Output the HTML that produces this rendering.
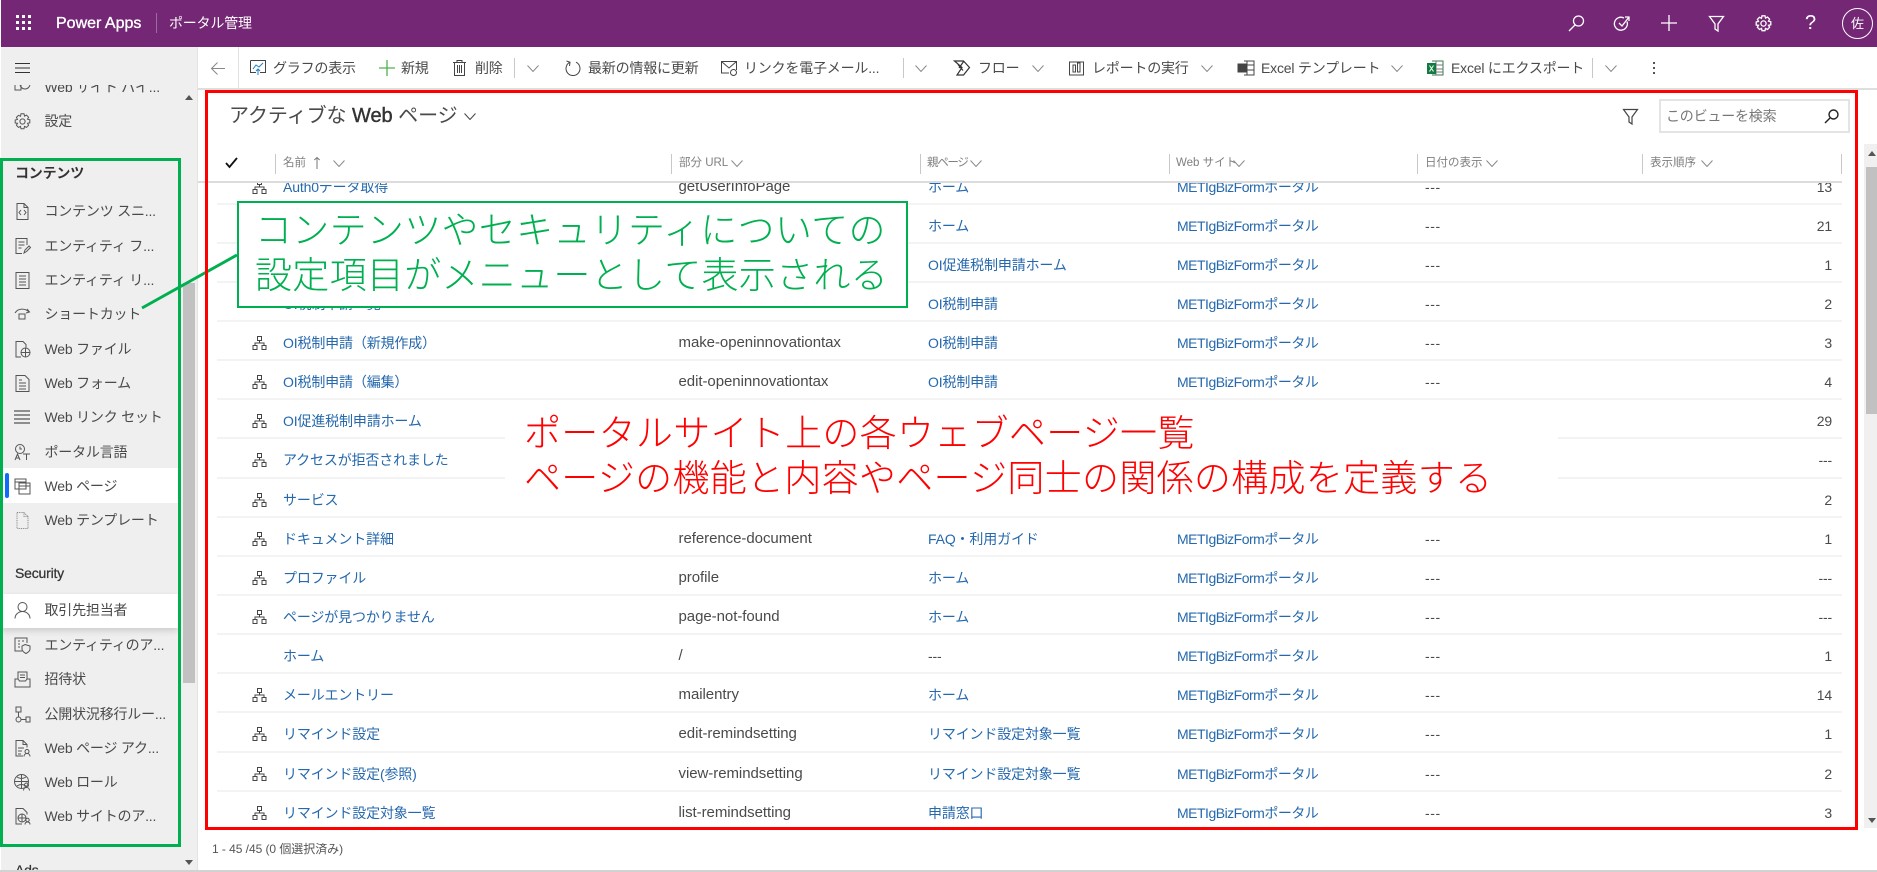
<!DOCTYPE html>
<html lang="ja"><head><meta charset="utf-8"><title>ポータル管理</title>
<style>
*{box-sizing:border-box}
html,body{margin:0;padding:0;width:1877px;height:872px;overflow:hidden;background:#fff;font-family:"Liberation Sans","Noto Sans CJK JP",sans-serif;color:#333}
.a{position:absolute;white-space:nowrap}
.t{position:absolute;white-space:nowrap;font-size:14px;line-height:20px;color:#4a4a4a}
svg{position:absolute;overflow:visible;fill:none;stroke:#555;stroke-width:1}
#side .t{left:44.5px;letter-spacing:-.2px}
#side svg{left:14px;width:17px;height:17px}
#rows{position:absolute;left:217px;top:183px;width:1625px;height:644px;overflow:hidden}
.r{position:relative;height:39.15px;border-bottom:2px solid #f3f3f3;font-size:14px;line-height:42px;white-space:nowrap;letter-spacing:-.15px}
.r:first-child{margin-top:-17.5px}
.r span,.r svg{position:absolute;top:0}
.r svg{left:35px;top:13px;width:15px;height:15px;stroke:#444}
.n{left:66px;color:#2568ad}.u{left:461.5px;color:#4a4a4a;font-size:15px;letter-spacing:-.05px}.p{left:711px;color:#2568ad}.s{left:960px;color:#2568ad;letter-spacing:-.5px}.d{left:1208px;color:#4a4a4a;letter-spacing:.6px}.o{right:10px;color:#4a4a4a}
.h{position:absolute;top:154px;width:1px;height:20px;background:#c8c8c8}
.c{position:absolute;white-space:nowrap;top:153px;font-size:11.5px;line-height:20px;color:#808080}
.top svg{stroke:#fff;stroke-width:1.3}
.tb{position:absolute;white-space:nowrap;top:58px;font-size:14px;line-height:20px;color:#4a4a4a;letter-spacing:-.2px}
.sep{position:absolute;top:58px;width:1px;height:20px;background:#c8c8c8}
.ch{width:12px;height:7px;stroke:#8a8a8a}
.note{font-weight:300;font-size:37px;line-height:45px;letter-spacing:.3px}
</style></head><body>
<svg width="0" height="0" style="position:absolute"><defs>
<symbol id="tree" viewBox="0 0 15 15"><path d="M5.500 1.500h4v4h-4zM1 10.500h4v4H1zM10 10.500h4v4h-4zM7.500 5.500v2.500M3 10.500V8h9v2.500"/></symbol>
<symbol id="chev" viewBox="0 0 12 7"><path d="M.5.500 6 6.500 11.500.5"/></symbol>
</defs></svg>

<!-- top bar -->
<div class="top" style="position:absolute;left:1px;top:0;width:1876px;height:47px;background:#742774"></div>
<div class="top">
<svg style="left:16px;top:15px;width:16px;height:16px;stroke:none;fill:#fff" viewBox="0 0 16 16"><path d="M0 0h3v3H0zM6 0h3v3H6zM12 0h3v3h-3zM0 6h3v3H0zM6 6h3v3H6zM12 6h3v3h-3zM0 12h3v3H0zM6 12h3v3H6zM12 12h3v3h-3z"/></svg>
<div class="a" style="left:56px;top:13px;font-size:16px;line-height:22px;color:#fff;-webkit-text-stroke:.35px #fff">Power Apps</div>
<div class="a" style="left:156px;top:13px;width:1px;height:20px;background:#a06aa0"></div>
<div class="a" style="left:169px;top:13px;font-size:14px;line-height:20px;color:#fff;letter-spacing:-.2px">ポータル管理</div>
<svg style="left:1568px;top:15px;width:17px;height:17px" viewBox="0 0 17 17"><circle cx="10.500" cy="6" r="5"/><path d="M7 10 1 16"/></svg>
<svg style="left:1614px;top:15px;width:17px;height:17px" viewBox="0 0 17 17"><path d="M13 6.500a6.500 6.500 0 1 1-3-3.500"/><path d="M5 8l3 3 7-9M11 2h4v4"/></svg>
<svg style="left:1661px;top:15px;width:16px;height:16px" viewBox="0 0 16 16"><path d="M8 0v16M0 8h16"/></svg>
<svg style="left:1709px;top:16px;width:15px;height:16px" viewBox="0 0 15 16"><path d="M.5.500h14L9 8v7l-3-2V8z"/></svg>
<svg style="left:1755px;top:15px;width:17px;height:17px" viewBox="0 0 17 17"><circle cx="8.500" cy="8.500" r="2.600"/><path d="M7 .8h3l.5 2.300 2-1 2.100 2.100-1.100 2 2.300.6v3l-2.300.5 1.100 2-2.100 2.100-2-1-.5 2.300H7l-.5-2.300-2 1-2.100-2.100 1.100-2L1.200 10V7l2.300-.6-1.100-2 2.100-2.100 2 1z"/></svg>
<div class="a" style="left:1805px;top:11px;font-size:20px;line-height:24px;color:#fff">?</div>
<div class="a" style="left:1842px;top:8px;width:31px;height:31px;border:1px solid #fff;border-radius:50%;color:#fff;font-size:13px;line-height:29px;text-align:center">佐</div>
</div>

<!-- sidebar -->
<div id="sidebg" style="position:absolute;left:1px;top:47px;width:196px;height:823px;background:#efefef"></div>
<div style="position:absolute;left:197px;top:47px;width:1px;height:823px;background:#e3e3e3"></div>
<svg style="left:15px;top:63px;width:15px;height:10px;stroke:#333" viewBox="0 0 15 10"><path d="M0 .5h15M0 5h15M0 9.500h15"/></svg>
<div style="position:absolute;left:183px;top:283px;width:12px;height:400px;background:#c1c1c1"></div>
<div style="position:absolute;left:185px;top:95px;width:0;height:0;border:4px solid transparent;border-bottom:5px solid #555;border-top:0"></div>
<div style="position:absolute;left:185px;top:860px;width:0;height:0;border:4px solid transparent;border-top:5px solid #555;border-bottom:0"></div>
<div id="side" style="position:absolute;left:0;top:85px;width:182px;height:785px;overflow:hidden">
<div style="position:absolute;left:1px;top:383px;width:177px;height:35px;background:#fff"></div>
<div style="position:absolute;left:5px;top:388px;width:4px;height:25px;background:#0f6cfb;border-radius:2px"></div>
<div style="position:absolute;left:1px;top:509px;width:177px;height:34px;background:#fff;box-shadow:0 3px 6px rgba(0,0,0,.14)"></div>
<div class="t" style="top:-8px">Web サイト パイ...</div>
<svg style="top:-10px" viewBox="0 0 17 17"><circle cx="11" cy="9" r="5"/><path d="M1 4h6v11H1z"/></svg>
<svg style="top:28px" viewBox="0 0 17 17"><circle cx="8.500" cy="8.500" r="2.600"/><path d="M7 .8h3l.5 2.300 2-1 2.100 2.100-1.100 2 2.300.6v3l-2.300.5 1.100 2-2.100 2.100-2-1-.5 2.300H7l-.5-2.300-2 1-2.100-2.100 1.100-2L1.200 10V7l2.300-.6-1.100-2 2.100-2.100 2 1z"/></svg>
<div class="t" style="top:26px">設定</div>
<div class="t" style="left:15px!important;top:78px;font-weight:700;color:#333">コンテンツ</div>
<svg style="top:118px" viewBox="0 0 17 17"><path d="M3 .5h7l4 4v12H3zM10 .5v4h4M7 7 5 9.500 7 12M10 7l2 2.500-2 2.500"/></svg>
<div class="t" style="top:116px">コンテンツ スニ...</div>
<svg style="top:153px" viewBox="0 0 17 17"><path d="M13 7V.5H2v15h6M4.500 4h6M4.500 7h6M4.500 10h3M10 15l1-3 4-4 1.500 1.500-4 4z"/></svg>
<div class="t" style="top:151px">エンティティ フ...</div>
<svg style="top:187px" viewBox="0 0 17 17"><path d="M2 .5h13v16H2zM5 4h7M5 7h7M5 10h7M5 13h7"/></svg>
<div class="t" style="top:185px">エンティティ リ...</div>
<svg style="top:221px" viewBox="0 0 17 17"><path d="M1 7c3-5 10-5 14-1M5 8h6v5H5zM13 3l2.500 3L12 7"/></svg>
<div class="t" style="top:219px">ショートカット</div>
<svg style="top:256px" viewBox="0 0 17 17"><path d="M7 16H2V.5h7l3 3v3"/><circle cx="11.500" cy="11.500" r="4.500"/><path d="M7 11.500h9M11.500 7v9"/></svg>
<div class="t" style="top:254px">Web ファイル</div>
<svg style="top:290px" viewBox="0 0 17 17"><path d="M2 .5h9l4 4v12H2zM5 5h3M5 8h7M5 11h7M5 14h7"/></svg>
<div class="t" style="top:288px">Web フォーム</div>
<svg style="top:324px" viewBox="0 0 17 17"><path d="M0 2h16M0 6h16M0 10h16M0 14h16" stroke-width="1.200"/></svg>
<div class="t" style="top:322px">Web リンク セット</div>
<svg style="top:359px" viewBox="0 0 17 17"><circle cx="6" cy="5" r="4.500"/><path d="M6 2.500V5h2M1 16l2.500-6L6 16M2 14h3M9 10h7M12.500 10v6"/></svg>
<div class="t" style="top:357px">ポータル言語</div>
<svg style="top:393px" viewBox="0 0 17 17"><path d="M1 1h11v10H1zM1 4h11M5 5h11v11H5zM5 8h11"/></svg>
<div class="t" style="top:391px">Web ページ</div>
<svg style="top:427px;stroke:#888" viewBox="0 0 17 17"><path d="M3 .5h7l4 4v12H3zM10 .5v4h4" stroke-dasharray="1 .8"/></svg>
<div class="t" style="top:425px">Web テンプレート</div>
<div class="t" style="left:15px!important;top:478px;color:#333;-webkit-text-stroke:.25px #333">Security</div>
<svg style="top:517px" viewBox="0 0 17 17"><circle cx="8.500" cy="5" r="4.500"/><path d="M1 16.500c0-4 3.500-7 7.500-7s7.500 3 7.500 7"/></svg>
<div class="t" style="top:515px">取引先担当者</div>
<svg style="top:552px" viewBox="0 0 17 17"><path d="M8 14H1V1h12v5M4 4h2M8 4h2M4 7h2M4 10h2M11 7.500l5 1.500v3c0 2-2 3.500-4 4.500-2-1-4-2.500-4-4.500V9z"/></svg>
<div class="t" style="top:550px">エンティティのア...</div>
<svg style="top:586px" viewBox="0 0 17 17"><path d="M1 8h3l1.500 2h6L13 8h3v8H1zM4 8V1h9v7M6 4h5M6 6.500h5"/></svg>
<div class="t" style="top:584px">招待状</div>
<svg style="top:621px" viewBox="0 0 17 17"><path d="M2 1h5v5H2zM4.500 6v5"/><circle cx="4.500" cy="13.500" r="2.500"/><path d="M7 13.500h5M12 11h4v5h-4z"/></svg>
<div class="t" style="top:619px">公開状況移行ルー...</div>
<svg style="top:655px" viewBox="0 0 17 17"><path d="M9 16H2V.5h7l4 4v3M9 .5v4h4M4 8h6M4 11h4M4 14h3"/><circle cx="13" cy="11.500" r="2"/><path d="M10 16.500c0-2 1.500-3 3-3s3 1 3 3"/></svg>
<div class="t" style="top:653px">Web ページ アク...</div>
<svg style="top:689px" viewBox="0 0 17 17"><circle cx="7.500" cy="7.500" r="7"/><path d="M.5 7.500h14M7.500.5v14M3 3c3 2 6 2 9 0M3 12c3-2 6-2 9 0"/><circle cx="12.500" cy="11" r="2"/><path d="M9.500 16.500c0-2 1.500-3 3-3s3 1 3 3" fill="#efefef"/></svg>
<div class="t" style="top:687px">Web ロール</div>
<svg style="top:723px" viewBox="0 0 17 17"><path d="M8 16H2V.5h7l4 4v2"/><circle cx="8" cy="10" r="4"/><path d="M4 10h8M8 6v8"/><circle cx="13.500" cy="12" r="1.700"/><path d="M11 16.500c0-1.500 1-2.500 2.500-2.500s2.500 1 2.500 2.500"/></svg>
<div class="t" style="top:721px">Web サイトのア...</div>
<div class="t" style="left:15px!important;top:775px;color:#333;-webkit-text-stroke:.25px #333">Ads</div>
</div>

<!-- toolbar -->
<div style="position:absolute;left:198px;top:88px;width:1679px;height:2px;background:#dedede"></div>
<div class="sep" style="left:238px;top:47px;height:41px;background:#e3e3e3"></div>
<svg style="left:211px;top:62px;width:14px;height:13px;stroke:#888" viewBox="0 0 14 13"><path d="M14 6.500H1M6.500.5l-6 6 6 6"/></svg>
<svg style="left:250px;top:60px;width:16px;height:16px;stroke:#444" viewBox="0 0 16 16"><path d="M.5.500h15v12H10M6 12.500H.5V.500"/><path d="M3 9l3-4 3 2 4-4" stroke="#1e7fbf"/><path d="M8 15V9M6 11l2-2 2 2" stroke="#1e7fbf"/></svg>
<div class="tb" style="left:273px">グラフの表示</div>
<svg style="left:379px;top:60px;width:16px;height:16px;stroke:#4fb04f;stroke-width:1.300" viewBox="0 0 16 16"><path d="M8 0v16M0 8h16"/></svg>
<div class="tb" style="left:401px">新規</div>
<svg style="left:453px;top:60px;width:13px;height:16px;stroke:#444" viewBox="0 0 13 16"><path d="M0 2.500h13M4 2.500V.5h5v2M1.500 2.500v13h10v-13M4.500 5v8M6.500 5v8M8.500 5v8"/></svg>
<div class="tb" style="left:475px">削除</div>
<div class="sep" style="left:514px"></div>
<svg class="ch" style="left:527px;top:65px"><use href="#chev"/></svg>
<svg style="left:565px;top:60px;width:16px;height:16px;stroke:#444" viewBox="0 0 16 16"><path d="M5 2.200A7 7 0 1 0 11 2.200M1.500 1 5 2.200 4.500 6"/></svg>
<div class="tb" style="left:588px">最新の情報に更新</div>
<svg style="left:721px;top:61px;width:17px;height:15px;stroke:#444" viewBox="0 0 17 15"><path d="M8 12H.5V.5h15V9M.5.500 8 7l7.500-6.500"/><circle cx="12.500" cy="11.500" r="3"/></svg>
<div class="tb" style="left:744px">リンクを電子メール...</div>
<div class="sep" style="left:903px"></div>
<svg class="ch" style="left:915px;top:65px"><use href="#chev"/></svg>
<svg style="left:954px;top:60px;width:16px;height:16px;stroke:#333;stroke-width:1.200" viewBox="0 0 16 16"><path d="M.5 1h9l6 6.500-6 7.500H3l5-7.500zM4 4.500l5 6M10 1 5 8"/></svg>
<div class="tb" style="left:978px">フロー</div>
<svg class="ch" style="left:1032px;top:65px"><use href="#chev"/></svg>
<svg style="left:1069px;top:60px;width:15px;height:16px;stroke:#444" viewBox="0 0 15 16"><path d="M.5 2h14v13H.5zM0 2h2M13 2h2M4 5v7h2.500V5zM8.500 3v9H11V3z"/></svg>
<div class="tb" style="left:1092px">レポートの実行</div>
<svg class="ch" style="left:1201px;top:65px"><use href="#chev"/></svg>
<svg style="left:1238px;top:60px;width:17px;height:16px;stroke:#444" viewBox="0 0 17 16"><path d="M6 1h10v14H6M9 1v14M6 5h10M6 10h10"/><path d="M0 4h9v8H0z" fill="#444"/></svg>
<div class="tb" style="left:1261px">Excel テンプレート</div>
<svg class="ch" style="left:1391px;top:65px"><use href="#chev"/></svg>
<svg style="left:1427px;top:60px;width:17px;height:17px;stroke:#3a7a50" viewBox="0 0 17 17"><path d="M5 1h11v14H5" /><path d="M9 1v14M9 5h7M9 9h7M9 12h7" stroke="#777"/><path d="M0 3h9v11H0z" fill="#107c41" stroke="none"/><path d="M2.500 5.500l4 6M6.500 5.500l-4 6" stroke="#fff"/></svg>
<div class="tb" style="left:1451px">Excel にエクスポート</div>
<div class="sep" style="left:1592px"></div>
<svg class="ch" style="left:1605px;top:65px"><use href="#chev"/></svg>
<svg style="left:1653px;top:62px;width:2px;height:12px;stroke:none;fill:#555" viewBox="0 0 2 12"><path d="M0 0h2v2H0zM0 5h2v2H0zM0 10h2v2H0z"/></svg>

<!-- view header -->
<div class="a" style="left:229px;top:101px;font-size:20px;line-height:30px;color:#4a4a4a;letter-spacing:-.05px">アクティブな <span style="-webkit-text-stroke:.4px #333;color:#333">Web</span> ページ</div>
<svg class="ch" style="left:464px;top:113px;stroke:#444"><use href="#chev"/></svg>
<svg style="left:1623px;top:109px;width:15px;height:16px;stroke:#444;stroke-width:1.200" viewBox="0 0 15 16"><path d="M.5.500h14L9 8v7l-3-2V8z"/></svg>
<div style="position:absolute;left:1659px;top:99px;width:191px;height:34px;border:2px solid #e4e4e4"></div>
<div class="a" style="left:1666px;top:106px;font-size:14px;line-height:20px;color:#777;letter-spacing:-.2px">このビューを検索</div>
<svg style="left:1824px;top:109px;width:15px;height:15px;stroke:#222;stroke-width:1.400" viewBox="0 0 15 15"><circle cx="9.500" cy="5.500" r="4.500"/><path d="M6 9 1 14"/></svg>

<!-- col headers -->
<svg style="left:225px;top:157px;width:13px;height:11px;stroke:#111;stroke-width:1.800" viewBox="0 0 13 11"><path d="M1 6l3.500 4L12 1"/></svg>
<div class="h" style="left:275px"></div><div class="c" style="left:283px">名前</div>
<svg style="left:314px;top:157px;width:6px;height:12px;stroke:#777" viewBox="0 0 6 12"><path d="M3 12V.5M.3 3 3 .5 5.700 3"/></svg>
<svg class="ch" style="left:333px;top:160px"><use href="#chev"/></svg>
<div class="h" style="left:671px"></div><div class="c" style="left:679px">部分 URL</div><svg class="ch" style="left:731px;top:160px"><use href="#chev"/></svg>
<div class="h" style="left:920px"></div><div class="c" style="left:927px;letter-spacing:-1.300px">親ページ</div><svg class="ch" style="left:970px;top:160px"><use href="#chev"/></svg>
<div class="h" style="left:1169px"></div><div class="c" style="left:1176px">Web サイト</div><svg class="ch" style="left:1233px;top:160px"><use href="#chev"/></svg>
<div class="h" style="left:1417px"></div><div class="c" style="left:1425px">日付の表示</div><svg class="ch" style="left:1486px;top:160px"><use href="#chev"/></svg>
<div class="h" style="left:1642px"></div><div class="c" style="left:1650px">表示順序</div><svg class="ch" style="left:1701px;top:160px"><use href="#chev"/></svg>
<div class="h" style="left:1841px"></div>
<div style="position:absolute;left:198px;top:181px;width:1644px;height:2px;background:#dcdcdc"></div>

<!-- rows -->
<div id="rows">
<div class="r"><svg><use href="#tree"/></svg><span class="n">Auth0データ取得</span><span class="u">getUserInfoPage</span><span class="p">ホーム</span><span class="s">METIgBizFormポータル</span><span class="d">---</span><span class="o">13</span></div>
<div class="r"><span class="p">ホーム</span><span class="s">METIgBizFormポータル</span><span class="d">---</span><span class="o">21</span></div>
<div class="r"><span class="p">OI促進税制申請ホーム</span><span class="s">METIgBizFormポータル</span><span class="d">---</span><span class="o">1</span></div>
<div class="r"><span class="n">OI税制申請一覧</span><span class="p">OI税制申請</span><span class="s">METIgBizFormポータル</span><span class="d">---</span><span class="o">2</span></div>
<div class="r"><svg><use href="#tree"/></svg><span class="n">OI税制申請（新規作成）</span><span class="u">make-openinnovationtax</span><span class="p">OI税制申請</span><span class="s">METIgBizFormポータル</span><span class="d">---</span><span class="o">3</span></div>
<div class="r"><svg><use href="#tree"/></svg><span class="n">OI税制申請（編集）</span><span class="u">edit-openinnovationtax</span><span class="p">OI税制申請</span><span class="s">METIgBizFormポータル</span><span class="d">---</span><span class="o">4</span></div>
<div class="r"><svg><use href="#tree"/></svg><span class="n">OI促進税制申請ホーム</span><span class="o">29</span></div>
<div class="r"><svg><use href="#tree"/></svg><span class="n">アクセスが拒否されました</span><span class="o">---</span></div>
<div class="r"><svg><use href="#tree"/></svg><span class="n">サービス</span><span class="o">2</span></div>
<div class="r"><svg><use href="#tree"/></svg><span class="n">ドキュメント詳細</span><span class="u">reference-document</span><span class="p">FAQ・利用ガイド</span><span class="s">METIgBizFormポータル</span><span class="d">---</span><span class="o">1</span></div>
<div class="r"><svg><use href="#tree"/></svg><span class="n">プロファイル</span><span class="u">profile</span><span class="p">ホーム</span><span class="s">METIgBizFormポータル</span><span class="d">---</span><span class="o">---</span></div>
<div class="r"><svg><use href="#tree"/></svg><span class="n">ページが見つかりません</span><span class="u">page-not-found</span><span class="p">ホーム</span><span class="s">METIgBizFormポータル</span><span class="d">---</span><span class="o">---</span></div>
<div class="r"><span class="n">ホーム</span><span class="u">/</span><span class="p" style="color:#4a4a4a">---</span><span class="s">METIgBizFormポータル</span><span class="d">---</span><span class="o">1</span></div>
<div class="r"><svg><use href="#tree"/></svg><span class="n">メールエントリー</span><span class="u">mailentry</span><span class="p">ホーム</span><span class="s">METIgBizFormポータル</span><span class="d">---</span><span class="o">14</span></div>
<div class="r"><svg><use href="#tree"/></svg><span class="n">リマインド設定</span><span class="u">edit-remindsetting</span><span class="p">リマインド設定対象一覧</span><span class="s">METIgBizFormポータル</span><span class="d">---</span><span class="o">1</span></div>
<div class="r"><svg><use href="#tree"/></svg><span class="n">リマインド設定(参照)</span><span class="u">view-remindsetting</span><span class="p">リマインド設定対象一覧</span><span class="s">METIgBizFormポータル</span><span class="d">---</span><span class="o">2</span></div>
<div class="r"><svg><use href="#tree"/></svg><span class="n">リマインド設定対象一覧</span><span class="u">list-remindsetting</span><span class="p">申請窓口</span><span class="s">METIgBizFormポータル</span><span class="d">---</span><span class="o">3</span></div>
</div>

<!-- page scrollbar -->
<div style="position:absolute;left:1864px;top:144px;width:13px;height:684px;background:#f0f0f0"></div>
<div style="position:absolute;left:1866px;top:167px;width:11px;height:247px;background:#c1c1c1"></div>
<div style="position:absolute;left:1868px;top:151px;width:0;height:0;border:4px solid transparent;border-bottom:5px solid #555;border-top:0"></div>
<div style="position:absolute;left:1868px;top:818px;width:0;height:0;border:4px solid transparent;border-top:5px solid #555;border-bottom:0"></div>

<!-- footer -->
<div class="a" style="left:212px;top:840px;font-size:12px;line-height:18px;color:#555;letter-spacing:-.05px">1 - 45 /45 (0 個選択済み)</div>
<div style="position:absolute;left:0;top:870px;width:1877px;height:2px;background:#d2d2d2"></div>

<!-- annotations -->
<div style="position:absolute;left:505px;top:402px;width:1053px;height:114px;background:#fff"></div>
<div class="a note" style="left:524px;top:411px;color:#f00">ポータルサイト上の各ウェブページ一覧<br>ページの機能と内容やページ同士の関係の構成を定義する</div>
<div style="position:absolute;left:237px;top:201px;width:671px;height:107px;background:#fff;border:2px solid #00b050"></div>
<div class="a note" style="left:255px;top:208px;color:#00b050">コンテンツやセキュリティについての<br>設定項目がメニューとして表示される</div>
<svg style="left:0;top:0;width:1877px;height:872px;stroke:#00b050;stroke-width:3"><path d="M237 255 142 308"/></svg>
<div style="position:absolute;left:0;top:158px;width:181px;height:689px;border:3px solid #00b050"></div>
<div style="position:absolute;left:205px;top:90px;width:1653px;height:740px;border:3px solid #f00"></div>
</body></html>
